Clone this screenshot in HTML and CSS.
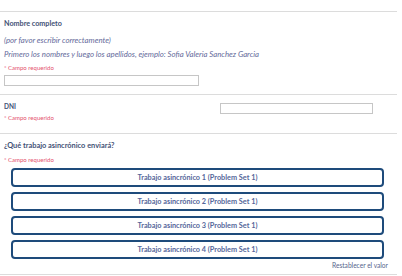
FILE: index.html
```html
<!DOCTYPE html>
<html lang="es">
<head>
    <meta charset="UTF-8">
    <meta name="viewport" content="width=device-width, initial-scale=1.0">
    <title>Formulario</title>
    <link rel="stylesheet" href="styles.css">
</head>
<body>
    <div class="form">
        <div class="section">
            <div class="label">Nombre completo</div>
            <div class="hint">(por favor escribir correctamente)</div>
            <div class="hint">Primero los nombres y luego los apellidos, ejemplo: Sofia Valeria Sanchez Garcia</div>
            <div class="required req-first">* Campo requerido</div>
            <input class="text-input wide" type="text">
        </div>

        <div class="section dni">
            <div class="row">
                <div class="label">DNI</div>
                <input class="text-input short" type="text">
            </div>
            <div class="required req-dni">* Campo requerido</div>
        </div>

        <div class="section choices">
            <div class="label question">¿Qué trabajo asincrónico enviará?</div>
            <div class="required req-choice">* Campo requerido</div>
            <div class="options">
                <button class="option">Trabajo asincrónico 1 (Problem Set 1)</button>
                <button class="option">Trabajo asincrónico 2 (Problem Set 1)</button>
                <button class="option">Trabajo asincrónico 3 (Problem Set 1)</button>
                <button class="option">Trabajo asincrónico 4 (Problem Set 1)</button>
            </div>
            <div class="reset">Restablecer el valor</div>
        </div>
        <div class="end"></div>
    </div>
</body>
</html>
```

FILE: styles.css
```css
body {
    margin: 0;
    background: #fff;
    font-family: Lato, "Liberation Sans", sans-serif;
    color: #3d5073;
}
.form {
    width: 397px;
    padding-top: 11px;
}
.section {
    border-top: 1px solid #dcdcdc;
    padding: 5px 0 8px 4px;
}
.label {
    font-size: 7.2px;
    font-weight: bold;
    line-height: 14px;
    color: #3f5175;
}
.section > .label:first-child {
    margin-bottom: 2px;
}
.label.question {
    font-size: 7.4px;
}
.hint {
    font-size: 7.8px;
    font-style: italic;
    line-height: 14px;
    color: #646a9a;
}
.required {
    font-size: 6px;
    line-height: 10px;
    color: #e4506c;
}
.req-first {
    margin-top: 2px;
}
.text-input {
    display: block;
    box-sizing: border-box;
    height: 11px;
    margin: 2px 0 0;
    padding: 0;
    border: 1px solid #c6c6c6;
    background: #fff;
}
.text-input.wide {
    width: 195px;
}
.dni {
    padding-bottom: 10px;
}
.row {
    display: flex;
    align-items: flex-end;
    justify-content: space-between;
    padding-right: 24px;
}
.row .label {
    margin-bottom: 0;
    font-size: 6.5px;
}
.text-input.short {
    width: 153px;
}
.req-dni {
    margin-top: -1px;
}
.choices {
    padding-bottom: 4px;
}
.req-choice {
    margin-top: 1px;
}
.options {
    display: flex;
    flex-direction: column;
    gap: 5px;
    margin: 3px 13px 0 7px;
}
.option {
    height: 19px;
    border: 2px solid #1e4b7b;
    border-radius: 4px;
    background: #fff;
    font-family: Lato, "Liberation Sans", sans-serif;
    font-size: 7.3px;
    font-weight: bold;
    color: #55669a;
    padding: 0;
}
.reset {
    margin-top: 1px;
    padding-right: 9px;
    text-align: right;
    font-size: 6.6px;
    line-height: 10px;
    color: #56658c;
}
.end {
    border-top: 1px solid #dcdcdc;
}
```
